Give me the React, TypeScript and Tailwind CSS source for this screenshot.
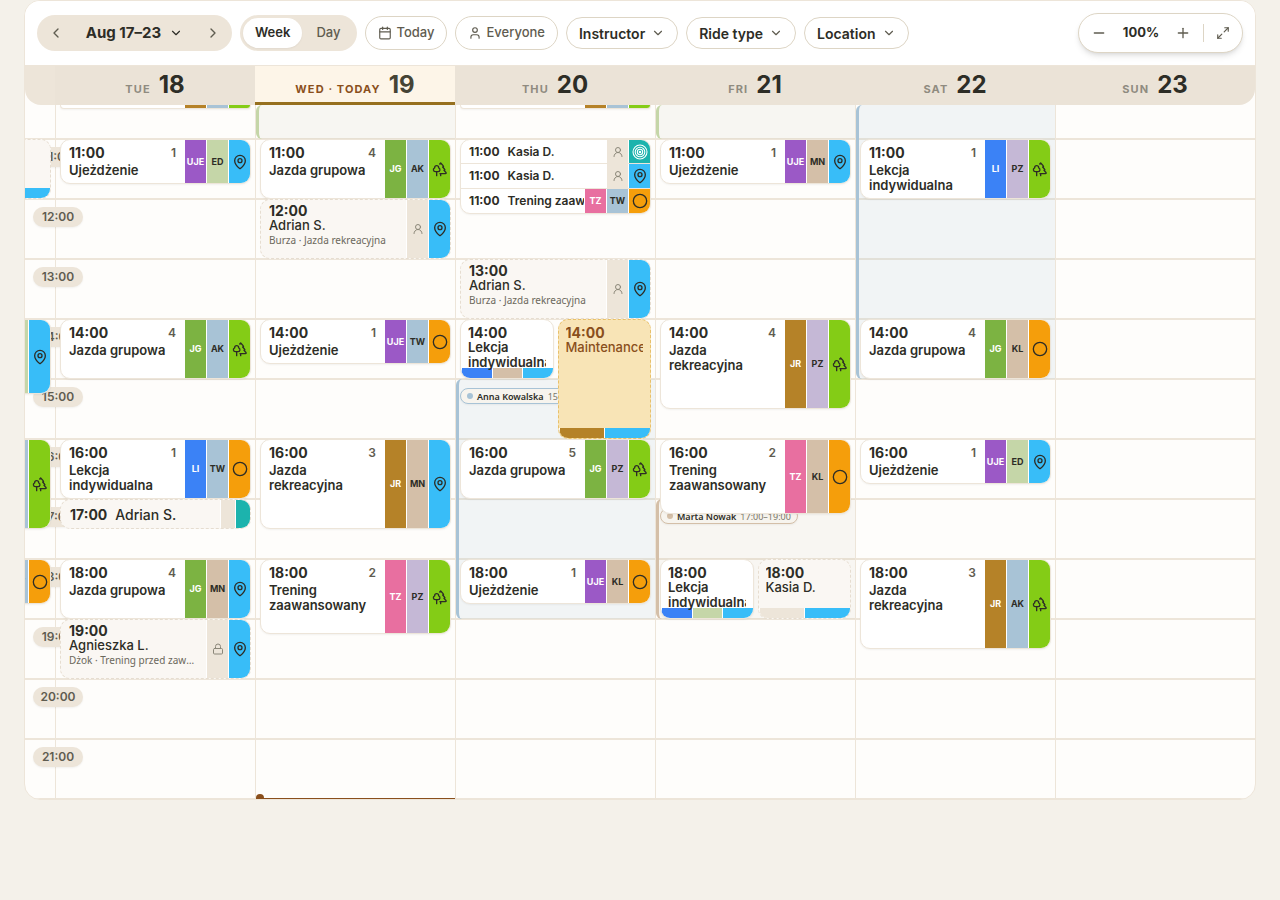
import React from 'react';
import {
  Calendar,
  ChevronDown,
  ChevronLeft,
  ChevronRight,
  Circle,
  Lock,
  MapPin,
  Maximize2,
  Minus,
  Plus,
  Trees,
  User,
  UserRound,
} from 'lucide-react';
import { clsx } from 'clsx';

type Place = 'pin' | 'trees' | 'ring' | 'target';

interface Ride {
  start: number;
  minutes: number;
  title: string;
  count?: number;
  note?: string;
  tags?: string[];
  place: Place;
  kind?: 'ride' | 'private' | 'locked' | 'maintenance';
  // Lane of a ride that shares its hour with another one
  lane?: 1 | 2;
}

interface Shift {
  start: number;
  minutes: number;
  tone: 'green' | 'blue' | 'sand';
  person?: string;
  hours?: string;
}

interface DayData {
  label: string;
  date: string;
  today?: boolean;
  rides: Ride[];
  shifts: Shift[];
}

const tagColors: Record<string, string> = {
  UJE: 'bg-[#9b59c6] text-white',
  JG: 'bg-[#7cb342] text-white',
  LI: 'bg-[#3b82f6] text-white',
  JR: 'bg-[#b58228] text-white',
  TZ: 'bg-[#e86fa0] text-white',
  ED: 'bg-[#c5d6a8] text-[#2d2d26]',
  AK: 'bg-[#a8c3d6] text-[#2d2d26]',
  TW: 'bg-[#a8c3d6] text-[#2d2d26]',
  MN: 'bg-[#d4bfa8] text-[#2d2d26]',
  KL: 'bg-[#d4bfa8] text-[#2d2d26]',
  PZ: 'bg-[#c5b8d6] text-[#2d2d26]',
};

const placeColors: Record<Place, string> = {
  pin: 'bg-[#38bdf8]',
  trees: 'bg-[#84cc16]',
  ring: 'bg-[#f59e0b]',
  target: 'bg-[#1cb3ad]',
};

const shiftBorders = {
  green: 'border-[#c5d6a8]',
  blue: 'border-[#a8c3d6]',
  sand: 'border-[#d4bfa8]',
};

const shiftFills = {
  green: 'bg-[#b8bfa8]/10',
  blue: 'bg-[#a8c3d6]/15',
  sand: 'bg-[#c8bda8]/10',
};

const dotTones = {
  green: 'bg-[#c5d6a8]',
  blue: 'bg-[#a8c3d6]',
  sand: 'bg-[#d4bfa8]',
};

const monday: Ride[] = [
  { start: 11, minutes: 60, title: 'Kasia D.', kind: 'private', place: 'pin', lane: 1 },
  { start: 14, minutes: 75, title: 'Trening zaawansowany', count: 2, tags: ['TZ', 'ED'], place: 'pin' },
  { start: 16, minutes: 90, title: 'Jazda rekreacyjna', count: 3, tags: ['JR', 'AK'], place: 'trees' },
  { start: 18, minutes: 45, title: 'Ujeżdżenie', count: 1, tags: ['UJE', 'TW'], place: 'ring' },
];

const days: DayData[] = [
  {
    label: 'Tue',
    date: '18',
    shifts: [],
    rides: [
      { start: 10, minutes: 30, title: '', tags: ['JR', 'AK'], place: 'trees' },
      { start: 11, minutes: 45, title: 'Ujeżdżenie', count: 1, tags: ['UJE', 'ED'], place: 'pin' },
      { start: 14, minutes: 60, title: 'Jazda grupowa', count: 4, tags: ['JG', 'AK'], place: 'trees' },
      { start: 16, minutes: 60, title: 'Lekcja indywidualna', count: 1, tags: ['LI', 'TW'], place: 'ring' },
      { start: 17, minutes: 30, title: 'Adrian S.', kind: 'private', place: 'target' },
      { start: 18, minutes: 60, title: 'Jazda grupowa', count: 4, tags: ['JG', 'MN'], place: 'pin' },
      { start: 19, minutes: 60, title: 'Agnieszka L.', note: 'Dżok · Trening przed zawodami', kind: 'locked', place: 'pin' },
    ],
  },
  {
    label: 'Wed · Today',
    date: '19',
    today: true,
    shifts: [{ start: 10, minutes: 60, tone: 'green' }],
    rides: [
      { start: 11, minutes: 60, title: 'Jazda grupowa', count: 4, tags: ['JG', 'AK'], place: 'trees' },
      { start: 12, minutes: 60, title: 'Adrian S.', note: 'Burza · Jazda rekreacyjna', kind: 'private', place: 'pin' },
      { start: 14, minutes: 45, title: 'Ujeżdżenie', count: 1, tags: ['UJE', 'TW'], place: 'ring' },
      { start: 16, minutes: 90, title: 'Jazda rekreacyjna', count: 3, tags: ['JR', 'MN'], place: 'pin' },
      { start: 18, minutes: 75, title: 'Trening zaawansowany', count: 2, tags: ['TZ', 'PZ'], place: 'trees' },
    ],
  },
  {
    label: 'Thu',
    date: '20',
    shifts: [{ start: 15, minutes: 240, tone: 'blue', person: 'Anna Kowalska', hours: '15:00–19:00' }],
    rides: [
      { start: 10, minutes: 30, title: '', tags: ['JR', 'AK'], place: 'trees' },
      { start: 13, minutes: 60, title: 'Adrian S.', note: 'Burza · Jazda rekreacyjna', kind: 'private', place: 'pin' },
      { start: 14, minutes: 60, title: 'Lekcja indywidualna', tags: ['LI', 'MN'], place: 'pin', lane: 1 },
      { start: 14, minutes: 120, title: 'Maintenance', kind: 'maintenance', tags: ['JR'], place: 'pin', lane: 2 },
      { start: 16, minutes: 60, title: 'Jazda grupowa', count: 5, tags: ['JG', 'PZ'], place: 'trees' },
      { start: 18, minutes: 45, title: 'Ujeżdżenie', count: 1, tags: ['UJE', 'KL'], place: 'ring' },
    ],
  },
  {
    label: 'Fri',
    date: '21',
    shifts: [
      { start: 10, minutes: 60, tone: 'green' },
      { start: 17, minutes: 120, tone: 'sand', person: 'Marta Nowak', hours: '17:00–19:00' },
    ],
    rides: [
      { start: 11, minutes: 45, title: 'Ujeżdżenie', count: 1, tags: ['UJE', 'MN'], place: 'pin' },
      { start: 14, minutes: 90, title: 'Jazda rekreacyjna', count: 4, tags: ['JR', 'PZ'], place: 'trees' },
      { start: 16, minutes: 75, title: 'Trening zaawansowany', count: 2, tags: ['TZ', 'KL'], place: 'ring' },
      { start: 18, minutes: 60, title: 'Lekcja indywidualna', tags: ['LI', 'ED'], place: 'pin', lane: 1 },
      { start: 18, minutes: 60, title: 'Kasia D.', kind: 'private', place: 'pin', lane: 2 },
    ],
  },
  {
    label: 'Sat',
    date: '22',
    shifts: [{ start: 10, minutes: 300, tone: 'blue' }],
    rides: [
      { start: 11, minutes: 60, title: 'Lekcja indywidualna', count: 1, tags: ['LI', 'PZ'], place: 'trees' },
      { start: 14, minutes: 60, title: 'Jazda grupowa', count: 4, tags: ['JG', 'KL'], place: 'ring' },
      { start: 16, minutes: 45, title: 'Ujeżdżenie', count: 1, tags: ['UJE', 'ED'], place: 'pin' },
      { start: 18, minutes: 90, title: 'Jazda rekreacyjna', count: 3, tags: ['JR', 'AK'], place: 'trees' },
    ],
  },
  { label: 'Sun', date: '23', shifts: [], rides: [] },
];

const groupRides: Ride[] = [
  { start: 11, minutes: 25, title: 'Kasia D.', place: 'target' },
  { start: 11, minutes: 25, title: 'Kasia D.', place: 'pin' },
  { start: 11, minutes: 25, title: 'Trening zaawansowany', tags: ['TZ', 'TW'], place: 'ring' },
];

const hours = [11, 12, 13, 14, 15, 16, 17, 18, 19, 20, 21];

// Two short rows for the rest of the 10:00 hour, then one row per quarter.
const quarterRows = 'grid-rows-[4px_30px_repeat(44,15px)]';

const gridRow = (start: number, minutes: number) => {
  if (start < 11) {
    return minutes <= 30 ? '1 / 2' : `1 / ${3 + (minutes - 60) / 15}`;
  }
  const line = 3 + (start - 11) * 4;
  return `${line} / ${line + minutes / 15}`;
};

const gridColumn = (lane?: number) => (lane ? `${lane} / ${lane + 1}` : '1 / 3');

const TargetIcon = () => (
  <svg viewBox="0 0 24 24" fill="none" stroke="#ffffff" strokeWidth="1.6" className="size-4">
    <circle cx="12" cy="12" r="10.500" />
    <circle cx="12" cy="12" r="7.200" />
    <circle cx="12" cy="12" r="4" />
    <circle cx="12" cy="12" r="1" />
  </svg>
);

const PlaceIcon = ({ place }: { place: Place }) => {
  if (place === 'pin') return <MapPin className="size-4" />;
  if (place === 'trees') return <Trees className="size-4" />;
  if (place === 'ring') return <Circle className="size-4" />;
  return <TargetIcon />;
};

const Strips = ({ ride }: { ride: Ride }) => {
  const strip = 'flex w-[22px] shrink-0 items-center justify-center border-l border-white';
  return (
    <div className="flex shrink-0 self-stretch">
      {(ride.tags ?? []).map((tag) => (
        <span key={tag} className={clsx(strip, 'text-[9px] font-bold', tagColors[tag])}>
          {tag}
        </span>
      ))}
      {!ride.tags && (
        <span className={clsx(strip, 'bg-[#ede5d9] text-[#8a8678]')}>
          {ride.kind === 'locked' ? <Lock className="size-3" /> : <UserRound className="size-3" />}
        </span>
      )}
      <span className={clsx(strip, 'text-[#2d2d26]', placeColors[ride.place])}>
        <PlaceIcon place={ride.place} />
      </span>
    </div>
  );
};

const cardBase = 'z-20 overflow-hidden rounded-[10px] border';

const cardTones = {
  ride: 'border-[#ede5d9] bg-white text-[#2d2d26] shadow-xs',
  private: 'border-dashed border-[#e6ddd0] bg-[#faf7f3] text-[#2d2d26]',
  locked: 'border-dashed border-[#e6ddd0] bg-[#faf7f3] text-[#2d2d26]',
  maintenance: 'border-dashed border-[#e8c06a] bg-[#f8e4b6] text-[#8a4f1c]',
};

interface RideCardProps {
  ride: Ride;
  className?: string;
}

const HalfCard = ({ ride, className = 'min-w-0' }: RideCardProps) => {
  const kind = ride.kind ?? 'ride';
  return (
    <article
      className={clsx(cardBase, 'flex flex-col', cardTones[kind], className)}
      style={{ gridRow: gridRow(ride.start, ride.minutes), gridColumn: gridColumn(ride.lane) }}
    >
      <div className="z-10 min-h-0 flex-1 px-[7px] pt-[5px]">
        <div className="overflow-x-clip">
          <p className="text-[14px] leading-[15px] font-bold">{ride.start}:00</p>
          <h3 className={clsx('text-[13px] leading-[15px]', kind === 'ride' ? 'font-semibold' : 'font-medium')}>{ride.title}</h3>
        </div>
      </div>
      <div className="flex h-2.5 shrink-0">
        {(ride.tags ?? []).map((tag) => (
          <span key={tag} className={clsx('flex-1 border-l border-white', tagColors[tag])} />
        ))}
        {!ride.tags && <span className="flex-1 border-l border-white bg-[#ede5d9]" />}
        <span className={clsx('flex-1 border-l border-white', placeColors[ride.place])} />
      </div>
    </article>
  );
};

const RideCard = ({ ride, className = 'min-w-0' }: RideCardProps) => {
  if (ride.lane) return <HalfCard ride={ride} className={className} />;

  const kind = ride.kind ?? 'ride';
  const style = { gridRow: gridRow(ride.start, ride.minutes), gridColumn: gridColumn() };

  if (ride.start < 11) {
    return (
      <article className={clsx(cardBase, 'flex justify-end rounded-t-none border-t-0', cardTones[kind], className)} style={style}>
        {(ride.tags ?? []).map((tag) => (
          <span key={tag} className={clsx('w-[22px] border-l border-white', tagColors[tag])} />
        ))}
        <span className={clsx('w-[22px] border-l border-white', placeColors[ride.place])} />
      </article>
    );
  }

  if (kind !== 'ride' && !ride.note) {
    return (
      <article className={clsx(cardBase, 'flex items-center', cardTones[kind], className)} style={style}>
        <p className="flex-1 px-[9px] text-[14px]">
          <span className="mr-2 font-bold">{ride.start}:00</span>
          <span className="font-medium">{ride.title}</span>
        </p>
        <span className="w-[15px] self-stretch border-l border-white bg-[#ede5d9]" />
        <span className={clsx('w-[15px] self-stretch border-l border-white', placeColors[ride.place])} />
      </article>
    );
  }

  return (
    <article className={clsx(cardBase, 'flex', cardTones[kind], className)} style={style}>
      {ride.note ? (
        <div className="min-w-0 flex-1 pt-[3px] pr-2 pl-2">
          <p className="text-[14px] leading-[15px] font-bold">{ride.start}:00</p>
          <h3 className="text-[13px] leading-[15px] font-medium">{ride.title}</h3>
          <p className="truncate font-['Noto_Sans',sans-serif] text-[10px] leading-[15px] text-[#6b685c]">{ride.note}</p>
        </div>
      ) : (
        <div className="min-w-0 flex-1 px-2 pt-[5px]">
          <div className="flex justify-between text-[14px] leading-[15px] font-bold">
            <span>{ride.start}:00</span>
            <span className="text-[12px] font-semibold text-[#5f5c50]">{ride.count}</span>
          </div>
          <h3 className="mt-[3px] text-[13px] leading-[15px] font-semibold">{ride.title}</h3>
        </div>
      )}
      <Strips ride={ride} />
    </article>
  );
};

const RideGroup = () => (
  <article
    className={clsx(cardBase, 'grid min-w-0 grid-rows-3 divide-y divide-[#ede5d9]', cardTones.ride)}
    style={{ gridRow: gridRow(11, 75), gridColumn: gridColumn() }}
  >
    {groupRides.map((ride, i) => (
      <div key={i} className="flex min-h-0 min-w-0 items-center">
        <p className="min-w-0 flex-1 overflow-hidden pl-2 text-[12px] whitespace-nowrap">
          <span className="mr-2 font-bold">{ride.start}:00</span>
          <span className="font-semibold">{ride.title}</span>
        </p>
        <Strips ride={ride} />
      </div>
    ))}
  </article>
);

const ShiftBand = ({ shift }: { shift: Shift }) => (
  <div
    className={clsx('-mx-1 rounded-l-md border-l-3', shiftBorders[shift.tone], shiftFills[shift.tone])}
    style={{ gridRow: gridRow(shift.start, shift.minutes), gridColumn: gridColumn() }}
  >
    {shift.person && (
      <p
        className={clsx(
          "mt-[9px] ml-px flex h-4 w-fit items-center rounded-full border bg-[#f7f4ee] px-1.5 font-['Noto_Sans',sans-serif] text-[9px] leading-none whitespace-nowrap shadow-xs",
          shiftBorders[shift.tone],
        )}
      >
        <span className={clsx('mr-1 size-1.5 rounded-full', dotTones[shift.tone])} />
        <span className="mr-1 font-semibold text-[#2d2d26]">{shift.person}</span>
        <span className="text-[#7a776b]">{shift.hours}</span>
      </p>
    )}
  </div>
);

const DayColumn = ({ day }: { day: DayData }) => (
  <section
    aria-label={`${day.label} ${day.date}`}
    className={clsx('grid min-w-0 flex-1 grid-cols-2 gap-x-1 border-l border-[#ede5d9] px-1', quarterRows)}
  >
    {day.shifts.map((shift) => (
      <ShiftBand key={shift.start} shift={shift} />
    ))}
    {day.rides.map((ride, i) => (
      <RideCard key={i} ride={ride} />
    ))}
    {day.label === 'Thu' && <RideGroup />}
    {day.today && (
      <div className="z-20 -mx-1 flex flex-col justify-end" style={{ gridRow: '46 / 47', gridColumn: gridColumn() }}>
        <span className="h-1 w-2 rounded-t-full bg-[#8a4f1c]" />
        <span className="h-px bg-[#8a4f1c]" />
      </div>
    )}
  </section>
);

const FilterButton = ({ label }: { label: string }) => (
  <button className="flex h-8 items-center gap-1.5 rounded-full border border-[#ddd5c5] bg-white px-3 text-[14px] font-semibold text-[#2d2d26]">
    {label}
    <ChevronDown className="size-3.5 text-[#5f5c50]" />
  </button>
);

const Toolbar = () => (
  <header className="flex h-[65px] items-center gap-2 border-b border-[#ede5d9] bg-white px-3 text-[#5f5c50]">
    <div className="flex h-9 w-[195px] items-center justify-between rounded-full bg-[#ede5d9] px-[11px]">
      <button aria-label="Previous week">
        <ChevronLeft className="size-4" />
      </button>
      <button className="flex items-center gap-2 text-[15px] font-bold text-[#2d2d26]">
        Aug 17–23
        <ChevronDown className="size-3.5" />
      </button>
      <button aria-label="Next week">
        <ChevronRight className="size-4" />
      </button>
    </div>
    <div className="flex h-9 items-center rounded-full bg-[#ede5d9] p-[3px] text-[13px]">
      <button className="h-[30px] rounded-full bg-white px-3 font-semibold text-[#2d2d26] shadow-xs">Week</button>
      <button className="h-[30px] px-3.5 font-medium">Day</button>
    </div>
    <button className="flex h-[34px] items-center gap-1 rounded-full border border-[#ddd5c5] px-3 text-[13px] font-medium">
      <Calendar className="size-3.5" />
      Today
    </button>
    <button className="flex h-[34px] items-center gap-1 rounded-full border border-[#ddd5c5] px-3 text-[13px] font-medium">
      <User className="size-3.5" />
      Everyone
    </button>
    <FilterButton label="Instructor" />
    <FilterButton label="Ride type" />
    <FilterButton label="Location" />
    <div className="ml-auto flex h-10 items-center rounded-full border border-[#ddd5c5] bg-white px-3 shadow-md">
      <button aria-label="Zoom out">
        <Minus className="size-4" />
      </button>
      <span className="w-[68px] text-center text-[13px] font-bold text-[#2d2d26]">100%</span>
      <button aria-label="Zoom in">
        <Plus className="size-4" />
      </button>
      <span className="mx-3 h-[18px] w-px bg-[#ddd5c5]" />
      <button aria-label="Full screen">
        <Maximize2 className="size-3.5" />
      </button>
    </div>
  </header>
);

const App = () => {
  return (
    <main className="min-h-screen bg-[#f4f1ea] px-6 font-[Inter,'Noto_Sans',sans-serif]">
      <div className="overflow-hidden rounded-2xl border border-[#ede5d9] bg-[#fefdfb]">
        <Toolbar />

        <div className="flex h-[39px] overflow-hidden rounded-b-2xl">
          <div className="w-[30px] bg-[#ede5d9]" />
          {days.map((day) => (
            <h2
              key={day.label}
              className={clsx(
                'flex flex-1 items-baseline justify-center gap-2 pt-[3px]',
                day.today ? 'border-b-3 border-[#96701f] bg-[#fdf5e8] text-[#8a4f1c]' : 'bg-[#ebe3d7] text-[#8f8b80]',
              )}
            >
              <span className="text-[11px] font-bold tracking-widest uppercase">{day.label}</span>
              <span className={clsx('text-[24px] leading-8 font-bold', day.today ? 'text-[#454335]' : 'text-[#2d2d26]')}>{day.date}</span>
            </h2>
          ))}
        </div>

        <div className="grid">
          <div className="[grid-area:1/1]">
            <div className="h-[34px] border-b border-[#ede5d9]" />
            {hours.map((hour) => (
              <div key={hour} className="h-[60px] border-y border-[#ede5d9]" />
            ))}
          </div>

          <div className="flex [grid-area:1/1]">
            <div className={clsx('grid w-[30px] shrink-0 grid-cols-[26px_0px]', quarterRows)}>
              {hours.map((hour) => (
                <time
                  key={hour}
                  className="z-10 mt-2 ml-2 flex h-5 w-[50px] items-center justify-center rounded-full bg-[#ede5d9] text-[12px] font-semibold text-[#5f5c50] shadow-xs"
                  style={{ gridRow: gridRow(hour, 30), gridColumn: 1 }}
                >
                  {hour}:00
                </time>
              ))}
              {monday.map((ride) => (
                <RideCard
                  key={ride.start}
                  ride={ride}
                  className={clsx('justify-self-end', ride.lane ? 'w-[93px]' : 'w-[191px]')}
                />
              ))}
            </div>
            {days.map((day) => (
              <DayColumn key={day.label} day={day} />
            ))}
          </div>
        </div>
      </div>
    </main>
  );
};

export default App;
